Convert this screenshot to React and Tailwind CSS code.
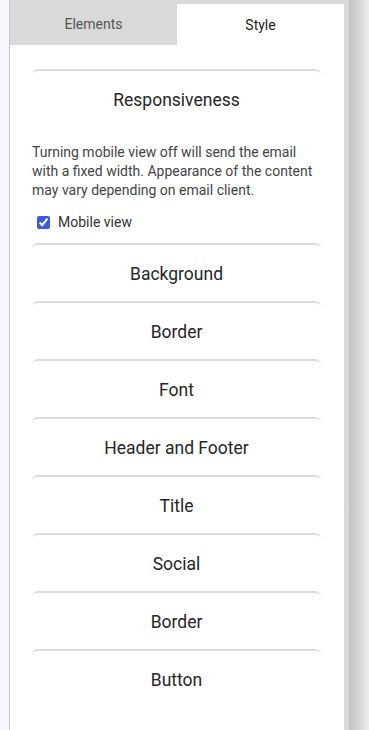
import React, { useState } from 'react';

const sections = ['Background', 'Border', 'Font', 'Header and Footer', 'Title', 'Social', 'Border', 'Button'];

const App = () => {
  const [tab, setTab] = useState('style');
  const [mobile, setMobile] = useState(true);

  return (
    <div className="flex h-screen overflow-hidden bg-[#f7f7fd]" style={{ fontFamily: 'Roboto, "Liberation Sans", sans-serif' }}>
      {/* left strip */}
      <div className="w-[9px] shrink-0 border-r border-[#c6c6ce] box-content" />

      {/* panel */}
      <div className="w-[339px] shrink-0 bg-[#d9d9d9] pr-[5px] flex flex-col">
        <div className="grid grid-cols-2 h-[45px]">
          <button
            onClick={() => setTab('elements')}
            className={`flex items-center justify-center text-[14px] ${tab === 'elements' ? 'bg-white mt-[4px] text-[#222]' : 'pt-[3px] text-[#555]'}`}
          >
            Elements
          </button>
          <button
            onClick={() => setTab('style')}
            className={`flex items-center justify-center text-[14px] ${tab === 'style' ? 'bg-white mt-[4px] pt-[1px] text-[#222]' : 'pt-[3px] text-[#555]'}`}
          >
            Style
          </button>
        </div>

        <div className="flex-1 bg-white pt-[24px] pl-[22px] pr-[23px]">
          {/* Responsiveness */}
          <div className="border-t-2 border-[#dcdcdc] rounded-t-md">
            <div className="h-[56px] pt-[2px] flex items-center justify-center text-[17.5px] text-[#262626]">Responsiveness</div>
            <div className="pt-[16px] pb-[11px]">
              <p className="text-[14px] leading-[19px] text-[#444]">
                Turning mobile view off will send the email with a fixed width. Appearance of the content may vary depending on email client.
              </p>
              <label className="mt-[12px] h-[20px] flex items-center pl-[5px] text-[14px] text-[#333]">
                <input
                  type="checkbox"
                  checked={mobile}
                  onChange={() => setMobile(!mobile)}
                  className="w-[13px] h-[13px] m-0 accent-[#3b5bdb]"
                />
                <span className="ml-[8px]">Mobile view</span>
              </label>
            </div>
          </div>

          {sections.map((name, i) => (
            <div key={i} className="border-t-2 border-[#dcdcdc] rounded-t-md">
              <div className="h-[56px] pt-[2px] flex items-center justify-center text-[17.5px] text-[#262626]">{name}</div>
            </div>
          ))}
        </div>
      </div>

      {/* shadow */}
      <div className="w-[20px] shrink-0 bg-gradient-to-r from-[#c2c2c2] to-[#ececec]" />
    </div>
  );
};

export default App;
